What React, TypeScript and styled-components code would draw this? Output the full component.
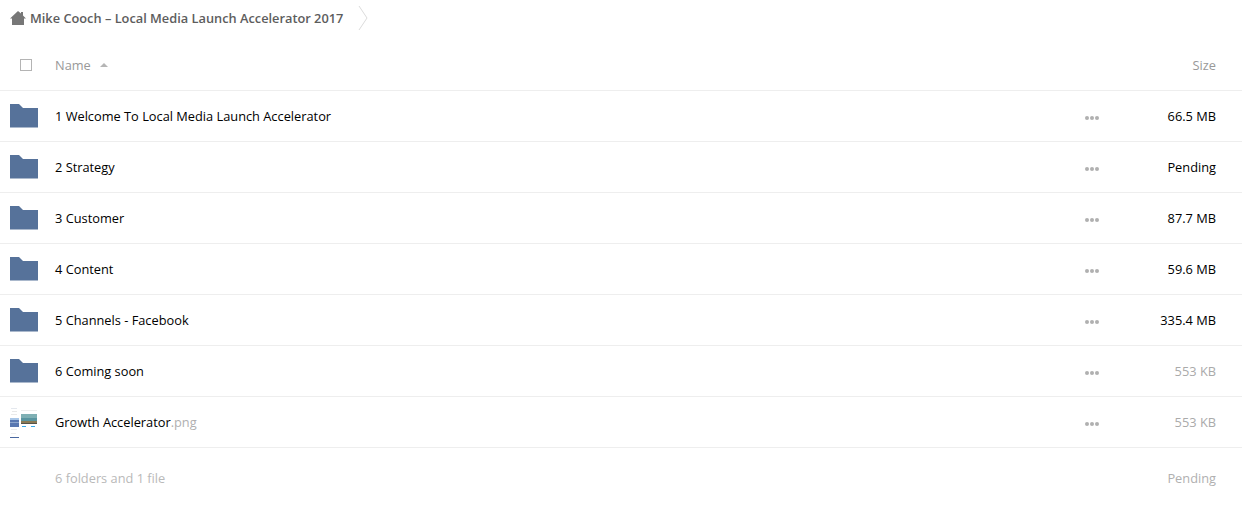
import React from "react";
import styled, { createGlobalStyle } from "styled-components";

const Global = createGlobalStyle`
  html, body { margin: 0; padding: 0; background: #fff; }
  body { font-family: "Open Sans", "Liberation Sans", sans-serif; font-size: 12.8px; color: #000; overflow: hidden; }
`;

const Page = styled.div`
  width: 1242px;
  height: 527px;
  display: flex;
  flex-direction: column;
`;

const Breadcrumb = styled.nav`
  height: 37px;
  box-sizing: border-box;
  padding: 0 0 2px 10px;
  display: flex;
  align-items: center;
  font-weight: 600;
`;

const Crumb = styled.span`
  margin-left: 4px;
  color: #5d5d5d;
`;

const Chevron = styled.svg`
  margin-left: 15px;
  display: block;
`;

const HeaderRow = styled.div`
  height: 51px;
  padding-top: 2px;
  flex: none;
  display: flex;
  align-items: center;
  border-bottom: 1px solid #eee;
  color: #999;
`;

const CheckCell = styled.div`
  width: 55px;
  display: flex;
  justify-content: flex-start;
  padding: 1px 0 0 20px;
  box-sizing: border-box;
`;

const Checkbox = styled.span`
  width: 10px;
  height: 10px;
  border: 1px solid #b4b4b4;
  display: block;
`;

const NameHeader = styled.div`
  flex: 1;
  display: flex;
  align-items: center;
  gap: 9px;
`;

const SortArrow = styled.span`
  width: 0;
  height: 0;
  border-left: 4px solid transparent;
  border-right: 4px solid transparent;
  border-bottom: 4px solid #b5b5b5;
`;

const SizeCell = styled.div<{ $muted?: boolean }>`
  width: 110px;
  padding-right: 26px;
  box-sizing: border-box;
  text-align: right;
  color: ${(p) => (p.$muted ? "#aaa" : "#000")};
`;

const HeaderSize = styled(SizeCell)`
  color: #999;
`;

const Row = styled.div`
  height: 50px;
  flex: none;
  display: flex;
  align-items: center;
  border-bottom: 1px solid #eee;
`;

const IconCell = styled.div`
  width: 55px;
  padding-left: 10px;
  box-sizing: border-box;
  display: flex;
  align-items: center;
  flex: none;
`;

const Name = styled.div`
  flex: 1;
  color: #000;
`;

const Ext = styled.span`
  color: #b0b0b0;
`;

const Dots = styled.div`
  width: 14px;
  display: flex;
  gap: 1px;
  margin-right: 33px;
  padding-top: 3px;
`;

const Dot = styled.span`
  width: 4px;
  height: 4px;
  border-radius: 50%;
  background: #b0b0b0;
`;

const SummaryRow = styled.div`
  height: 59px;
  display: flex;
  align-items: center;
  color: #b9b9b9;
`;

const SummaryText = styled.div`
  flex: 1;
  padding-left: 55px;
`;

const Folder = () => (
  <svg width="28" height="24" viewBox="0 0 28 24">
    <path d="M0 0H9L13 4H28V23.5H0Z" fill="#56729a" />
  </svg>
);

const Thumb = () => (
  <svg width="28" height="32" viewBox="0 0 28 32">
    <rect x="1" y="2" width="6" height="1" fill="#e4e8ee" />
    <rect x="2" y="5" width="5" height="1" fill="#e8e8e8" />
    <rect x="1" y="8" width="6" height="1" fill="#eaeaea" />
    <rect x="0" y="12" width="9" height="2" fill="#a8c6e8" />
    <rect x="0" y="14" width="9" height="7" fill="#5a78b0" />
    <rect x="0" y="16" width="9" height="1" fill="#8ea6cc" />
    <rect x="1" y="23" width="6" height="1" fill="#ececec" />
    <rect x="1" y="27" width="5" height="1" fill="#eeeeee" />
    <rect x="0" y="31" width="9" height="1" fill="#4a68a0" />
    <rect x="11" y="4" width="16" height="1" fill="#eeeeee" />
    <rect x="11" y="8" width="16" height="4" fill="#7fb0b4" />
    <rect x="11" y="12" width="16" height="3" fill="#5a95a0" />
    <rect x="11" y="15" width="16" height="2" fill="#8a7a55" />
    <rect x="11" y="17" width="16" height="1" fill="#55534a" />
    <rect x="12" y="20" width="4" height="1" fill="#35a8e8" />
    <rect x="21" y="20" width="4" height="1" fill="#35a8e8" />
  </svg>
);

const rows: { name: string; size: string; muted?: boolean }[] = [
  { name: "1 Welcome To Local Media Launch Accelerator", size: "66.5 MB" },
  { name: "2 Strategy", size: "Pending" },
  { name: "3 Customer", size: "87.7 MB" },
  { name: "4 Content", size: "59.6 MB" },
  { name: "5 Channels - Facebook", size: "335.4 MB" },
  { name: "6 Coming soon", size: "553 KB", muted: true },
];

const RowDots = () => (
  <Dots>
    <Dot />
    <Dot />
    <Dot />
  </Dots>
);

export default function App() {
  return (
    <Page>
      <Global />
      <Breadcrumb>
        <svg width="16" height="14" viewBox="0 0 16 14">
          <path d="M8 0L11 2.5V1H13V4.5L16 7.5H14V14H2V7.5H0Z" fill="#777" />
        </svg>
        <Crumb>Mike Cooch – Local Media Launch Accelerator 2017</Crumb>
        <Chevron width="10" height="26" viewBox="0 0 10 26">
          <path d="M1 1L9 13L1 25" fill="none" stroke="#dcdcdc" strokeWidth="1" />
        </Chevron>
      </Breadcrumb>
      <HeaderRow>
        <CheckCell>
          <Checkbox />
        </CheckCell>
        <NameHeader>
          Name
          <SortArrow />
        </NameHeader>
        <HeaderSize>Size</HeaderSize>
      </HeaderRow>
      {rows.map((r) => (
        <Row key={r.name}>
          <IconCell>
            <Folder />
          </IconCell>
          <Name>{r.name}</Name>
          <RowDots />
          <SizeCell $muted={r.muted}>{r.size}</SizeCell>
        </Row>
      ))}
      <Row>
        <IconCell>
          <Thumb />
        </IconCell>
        <Name>
          Growth Accelerator<Ext>.png</Ext>
        </Name>
        <RowDots />
        <SizeCell $muted>553 KB</SizeCell>
      </Row>
      <SummaryRow>
        <SummaryText>6 folders and 1 file</SummaryText>
        <SizeCell $muted>
          <Ext>Pending</Ext>
        </SizeCell>
      </SummaryRow>
    </Page>
  );
}
